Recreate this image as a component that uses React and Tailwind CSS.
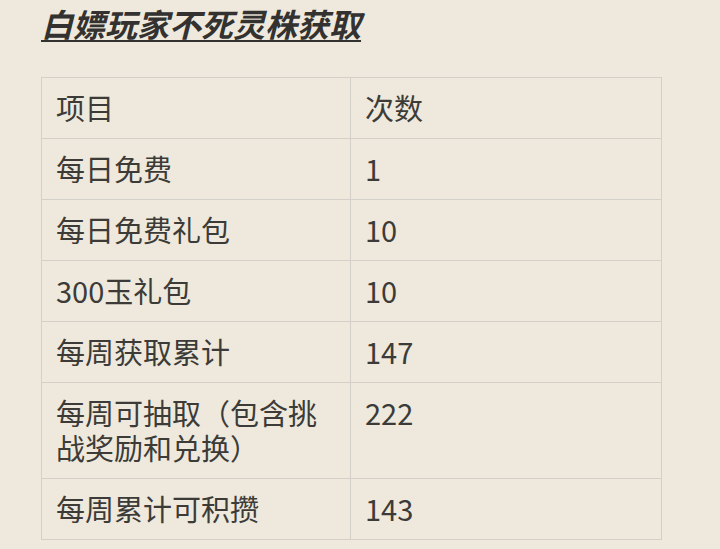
import React from 'react'

const rows = [
  { name: '每日免费', count: '1' },
  { name: '每日免费礼包', count: '10' },
  { name: '300玉礼包', count: '10' },
  { name: '每周获取累计', count: '147' },
  { name: '每周可抽取（包含挑战奖励和兑换）', count: '222' },
  { name: '每周累计可积攒', count: '143' },
]

function Cell({ children, last }) {
  return (
    <td className={`border border-[#d3d0c9] pl-[14px] pr-[12px] pt-[12px] pb-[13px] align-top leading-[35px] ${last ? 'w-[311px]' : 'w-[309px]'}`}>
      {children}
    </td>
  )
}

export default function App() {
  return (
    <div
      className="min-h-[549px] w-[720px] bg-[#eee9dc] text-[#3c3b38] overflow-hidden"
      style={{ fontFamily: '"Noto Sans CJK SC", "Noto Sans", sans-serif' }}
    >
      <div className="pl-[41px]">
        <h1 className="pt-[4px] pr-2 text-[32px] font-bold italic underline underline-offset-[3px] decoration-[2px] leading-[38px] text-[#333230]">
          白嫖玩家不死灵株获取
        </h1>
        <table className="mt-[35px] border-collapse text-[29px] w-[620px] table-fixed">
          <tbody>
            <tr>
              <Cell>项目</Cell>
              <Cell last>次数</Cell>
            </tr>
            {rows.map(r => (
              <tr key={r.name}>
                <Cell>{r.name}</Cell>
                <Cell last>{r.count}</Cell>
              </tr>
            ))}
          </tbody>
        </table>
      </div>
    </div>
  )
}
